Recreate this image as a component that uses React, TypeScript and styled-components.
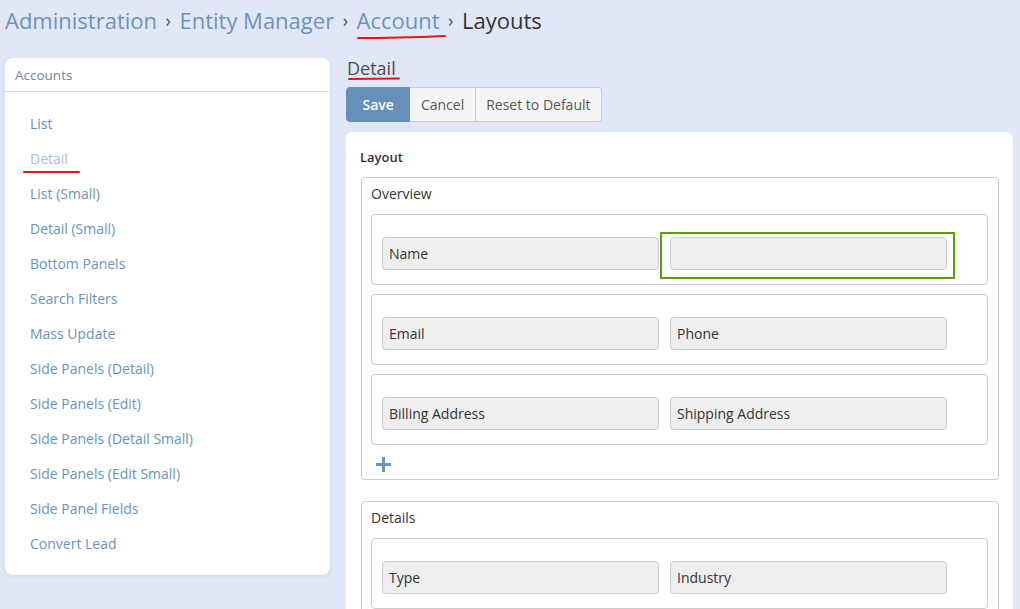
import React from "react";
import styled, { createGlobalStyle } from "styled-components";

const GlobalStyle = createGlobalStyle`
    html, body {
        margin: 0;
        padding: 0;
        background: #e2e7f8;
        font-family: "Open Sans", "Noto Sans", sans-serif;
        font-size: 14px;
        color: #333;
    }
    * {
        box-sizing: border-box;
    }
`;

const LINK = "#6a93bd";

const Page = styled.div`
    padding: 0 7px 0 5px;
`;

const Breadcrumb = styled.div`
    display: flex;
    align-items: center;
    gap: 8.5px;
    height: 40px;
    margin-bottom: 18px;
    font-size: 22px;
    white-space: nowrap;
`;

const Crumb = styled.span<{ $current?: boolean }>`
    position: relative;
    color: ${(p) => (p.$current ? "#333" : LINK)};
`;

const Sep = styled.span`
    color: #555;
    font-size: 18px;
`;

// hand drawn red marks that lie over the text
const Mark = styled.svg<{ $left: number; $top: number }>`
    position: absolute;
    left: ${(p) => p.$left}px;
    top: ${(p) => p.$top}px;
    overflow: visible;
    pointer-events: none;
`;

const Columns = styled.div`
    display: grid;
    grid-template-columns: 325px 1fr;
    gap: 16px;
    align-items: start;
`;

const SideCard = styled.div`
    background: #fff;
    border-radius: 8px;
    box-shadow: 0 1px 4px rgba(90, 100, 140, 0.15);
    padding-bottom: 14px;
`;

const SideHeader = styled.div`
    height: 34px;
    line-height: 34px;
    padding-left: 10px;
    font-size: 13.5px;
    color: #6b87a8;
    border-bottom: 1px solid #dcdcdc;
    margin-bottom: 14px;
`;

const SideItem = styled.div<{ $active?: boolean }>`
    position: relative;
    height: 35px;
    line-height: 35px;
    padding-left: 25px;
    color: ${(p) => (p.$active ? "#a8bfd8" : LINK)};
`;

const Main = styled.div`
    display: flex;
    flex-direction: column;
`;

const Title = styled.div`
    position: relative;
    align-self: flex-start;
    font-size: 18px;
    line-height: 20px;
    color: #4d4d4d;
    padding-left: 1px;
    margin-bottom: 9px;
`;

const ButtonGroup = styled.div`
    display: flex;
    margin-bottom: 10px;
`;

const Button = styled.button<{ $primary?: boolean }>`
    height: 35px;
    padding: 0 ${(p) => (p.$primary ? 15.5 : 10.5)}px;
    font-family: inherit;
    font-size: 14px;
    font-weight: ${(p) => (p.$primary ? 600 : 400)};
    color: ${(p) => (p.$primary ? "#fff" : "#555")};
    background: ${(p) => (p.$primary ? "#6690b8" : "#f5f5f5")};
    border: 1px solid ${(p) => (p.$primary ? "#6690b8" : "#ccc")};
    border-left-width: ${(p) => (p.$primary ? 1 : 0)}px;
    border-radius: 0;
    &:first-child {
        border-radius: 4px 0 0 4px;
    }
    &:last-child {
        border-radius: 0 4px 4px 0;
    }
`;

const Card = styled.div`
    background: #fff;
    border-radius: 6px;
    padding: 15px 14px 20px 15px;
`;

const CardTitle = styled.div`
    font-weight: 600;
    font-size: 13px;
    line-height: 20px;
    margin-bottom: 10px;
    margin-left: -1px;
`;

const Panel = styled.div`
    border: 1px solid #ccc;
    border-radius: 4px;
    padding: 6px 10px 4px 9px;
    & + & {
        margin-top: 21px;
    }
`;

const PanelLabel = styled.div`
    line-height: 20px;
    margin-bottom: 10px;
    color: #333;
`;

const Row = styled.div`
    display: grid;
    grid-template-columns: 277px 277px;
    gap: 11px;
    height: 71px;
    padding: 22px 0 14px 10px;
    border: 1px solid #ccc;
    border-radius: 4px;
    margin-bottom: 9px;
`;

const Cell = styled.div<{ $selected?: boolean }>`
    position: relative;
    &::after {
        content: "";
        display: ${(p) => (p.$selected ? "block" : "none")};
        position: absolute;
        left: -10px;
        right: -8px;
        top: -5px;
        bottom: -9px;
        border: 2px solid #58a00f;
    }
`;

const Field = styled.div`
    height: 33px;
    line-height: 31px;
    padding: 0 6px;
    background: #eee;
    border: 1px solid #ccc;
    border-radius: 4px;
    color: #333;
`;

const AddRow = styled.div`
    height: 22px;
    margin-top: -1px;
    padding-left: 5px;
    display: flex;
    align-items: center;
`;

const sideItems = [
    "List",
    "Detail",
    "List (Small)",
    "Detail (Small)",
    "Bottom Panels",
    "Search Filters",
    "Mass Update",
    "Side Panels (Detail)",
    "Side Panels (Edit)",
    "Side Panels (Detail Small)",
    "Side Panels (Edit Small)",
    "Side Panel Fields",
    "Convert Lead",
];

const panels: { label: string; rows: string[][]; add?: boolean }[] = [
    {
        label: "Overview",
        rows: [
            ["Name", ""],
            ["Email", "Phone"],
            ["Billing Address", "Shipping Address"],
        ],
        add: true,
    },
    {
        label: "Details",
        rows: [["Type", "Industry"]],
    },
];

const RedLine = ({ left, top, width, d }: { left: number; top: number; width: number; d: string }) => (
    <Mark $left={left} $top={top} width={width} height={4} viewBox={`0 0 ${width} 4`}>
        <path d={d} stroke="#e8141b" strokeWidth={2} fill="none" strokeLinecap="round" />
    </Mark>
);

export default function App() {
    return (
        <>
            <GlobalStyle />
            <Page>
                <Breadcrumb>
                    <Crumb>Administration</Crumb>
                    <Sep>›</Sep>
                    <Crumb>Entity Manager</Crumb>
                    <Sep>›</Sep>
                    <Crumb>
                        Account
                        <RedLine left={0} top={30} width={89} d="M1 3 Q 40 3 88 1" />
                    </Crumb>
                    <Sep>›</Sep>
                    <Crumb $current>Layouts</Crumb>
                </Breadcrumb>
                <Columns>
                    <SideCard>
                        <SideHeader>Accounts</SideHeader>
                        {sideItems.map((item) => (
                            <SideItem key={item} $active={item === "Detail"}>
                                {item}
                                {item === "Detail" && (
                                    <RedLine left={18} top={29} width={57} d="M1 2 L 56 2" />
                                )}
                            </SideItem>
                        ))}
                    </SideCard>
                    <Main>
                        <Title>
                            Detail
                            <RedLine left={2} top={19} width={52} d="M1 2 L 51 1.5" />
                        </Title>
                        <ButtonGroup>
                            <Button $primary>Save</Button>
                            <Button>Cancel</Button>
                            <Button>Reset to Default</Button>
                        </ButtonGroup>
                        <Card>
                            <CardTitle>Layout</CardTitle>
                            {panels.map((panel) => (
                                <Panel key={panel.label}>
                                    <PanelLabel>{panel.label}</PanelLabel>
                                    {panel.rows.map((row, i) => (
                                        <Row key={i}>
                                            {row.map((name, j) => (
                                                <Cell key={j} $selected={panel.label === "Overview" && i === 0 && j === 1}>
                                                    <Field>{name}</Field>
                                                </Cell>
                                            ))}
                                        </Row>
                                    ))}
                                    {panel.add && (
                                        <AddRow>
                                            <svg width="15" height="15" viewBox="0 0 15 15">
                                                <rect x="6" y="0" width="3" height="15" fill={LINK} />
                                                <rect x="0" y="6" width="15" height="3" fill={LINK} />
                                            </svg>
                                        </AddRow>
                                    )}
                                </Panel>
                            ))}
                        </Card>
                    </Main>
                </Columns>
            </Page>
        </>
    );
}
